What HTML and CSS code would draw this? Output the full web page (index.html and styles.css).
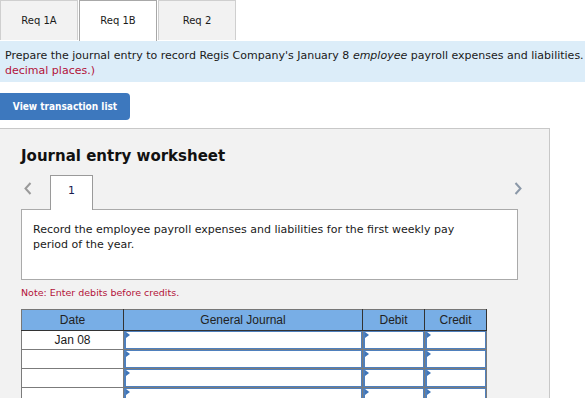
FILE: index.html
```html
<!DOCTYPE html>
<html lang="en">
<head>
    <meta charset="UTF-8">
    <title>Req 1B</title>
    <link rel="stylesheet" href="styles.css">
</head>
<body>
    <div class="tabs">
        <div class="tab">Req 1A</div>
        <div class="tab active">Req 1B</div>
        <div class="tab">Req 2</div>
    </div>
    <div class="instructions">
        Prepare the journal entry to record Regis Company's January 8 <em>employee</em> payroll expenses and liabilities. <span class="red">(Round your final answers to 2<br>decimal places.)</span>
    </div>
    <button class="view-btn">View transaction list</button>

    <div class="worksheet">
        <h2 class="ws-title">Journal entry worksheet</h2>
        <div class="ws-nav">
            <svg class="arrow left" width="8" height="13" viewBox="0 0 8 13"><path d="M6.5 1 L1.5 6.5 L6.5 12" fill="none" stroke="#9a9a9a" stroke-width="2"/></svg>
            <div class="ws-tab">1</div>
            <svg class="arrow right" width="8" height="13" viewBox="0 0 8 13"><path d="M1.5 1 L6.5 6.5 L1.5 12" fill="none" stroke="#8b98a8" stroke-width="2"/></svg>
        </div>
        <div class="ws-box">
            Record the employee payroll expenses and liabilities for the first weekly pay<br>period of the year.
        </div>
        <p class="note">Note: Enter debits before credits.</p>

        <table class="journal">
            <thead>
                <tr>
                    <th class="c-date">Date</th>
                    <th class="c-acct">General Journal</th>
                    <th class="c-num">Debit</th>
                    <th class="c-num">Credit</th>
                </tr>
            </thead>
            <tbody>
                <tr>
                    <td class="date">Jan 08</td>
                    <td class="inp"><div class="field"></div></td>
                    <td class="inp"><div class="field"></div></td>
                    <td class="inp"><div class="field"></div></td>
                </tr>
                <tr>
                    <td class="date"></td>
                    <td class="inp"><div class="field"></div></td>
                    <td class="inp"><div class="field"></div></td>
                    <td class="inp"><div class="field"></div></td>
                </tr>
                <tr>
                    <td class="date"></td>
                    <td class="inp"><div class="field"></div></td>
                    <td class="inp"><div class="field"></div></td>
                    <td class="inp"><div class="field"></div></td>
                </tr>
                <tr>
                    <td class="date"></td>
                    <td class="inp"><div class="field"></div></td>
                    <td class="inp"><div class="field"></div></td>
                    <td class="inp"><div class="field"></div></td>
                </tr>
            </tbody>
        </table>
    </div>
</body>
</html>
```

FILE: styles.css
```css
html {
    overflow: hidden;
}
body {
    margin: 0;
    font-family: "DejaVu Sans", Verdana, sans-serif;
    font-size: 11px;
    color: #1a1a1a;
    background-color: #fff;
}
.tabs {
    display: flex;
    height: 41px;
}
.tab {
    width: 76px;
    height: 39px;
    line-height: 40px;
    margin-right: 1px;
    text-align: center;
    font-size: 10px;
    background-color: #f2f2f2;
    border: 1px solid #cfcfcf;
    border-bottom: none;
}
.tab.active {
    height: 40px;
    background-color: #fff;
    border-color: #a8a8a8;
}
.instructions {
    background-color: #dcedf9;
    padding: 7px 5px 4px;
    line-height: 15px;
    height: 30px;
    white-space: nowrap;
    overflow: hidden;
}
.red {
    color: #b3123a;
}
.view-btn {
    display: block;
    margin-top: 11px;
    width: 130px;
    height: 27px;
    padding: 0;
    border: none;
    border-radius: 0 4px 4px 0;
    background-color: #3d78be;
    color: #fff;
    font-family: "DejaVu Sans", Verdana, sans-serif;
    font-stretch: condensed;
    font-size: 10px;
    font-weight: bold;
}
.worksheet {
    margin-top: 8px;
    width: 528px;
    height: 300px;
    padding: 17px 0 0 21px;
    background-color: #f2f2f2;
    border-top: 1px solid #c8c8c8;
    border-right: 1px solid #c8c8c8;
}
.ws-title {
    margin: 0;
    font-size: 15px;
    font-weight: bold;
    line-height: 20px;
    color: #111;
}
.ws-nav {
    display: flex;
    align-items: center;
    margin-top: 9px;
    height: 34px;
    width: 496px;
}
.arrow {
    display: block;
    margin-bottom: 8px;
}
.arrow.left {
    margin-left: 3px;
    margin-right: 18px;
}
.arrow.right {
    margin-left: auto;
    margin-right: -5px;
}
.ws-tab {
    align-self: stretch;
    width: 41px;
    margin-bottom: -1px;
    position: relative;
    z-index: 1;
    background-color: #fff;
    border: 1px solid #9a9a9a;
    border-bottom: none;
    text-align: center;
    line-height: 29px;
    color: #1a1a50;
}
.ws-box {
    width: 473px;
    height: 46px;
    padding: 12px 11px 11px;
    background-color: #fff;
    border: 1px solid #aaa;
    line-height: 15px;
}
.note {
    margin: 6px 0 0;
    font-size: 9.5px;
    line-height: 14px;
    color: #b3123a;
}
.journal {
    margin-top: 9px;
    border-collapse: collapse;
    width: 466px;
    font-family: "Liberation Sans", Arial, sans-serif;
    font-size: 12px;
}
.journal th {
    height: 20px;
    padding: 0;
    background-color: #78aee6;
    color: #222;
    font-weight: normal;
    border: 1px solid #333;
    border-top-color: #777;
}
.journal th:first-child {
    border-left-color: #777;
}
.c-date {
    width: 101px;
}
.c-acct {
    width: 238px;
}
.c-num {
    width: 61px;
}
.journal td {
    height: 18px;
    padding: 0;
    border: 1px solid #7b7b7b;
    background-color: #fff;
}
.journal td.date {
    text-align: center;
}
.journal td.inp {
    position: relative;
}
.field {
    box-sizing: border-box;
    height: 18px;
    border: 1px solid #4f80bd;
    border-left-width: 2px;
}
.field::before {
    content: "";
    position: absolute;
    left: 2px;
    top: 1px;
    border-left: 4px solid #3f75b8;
    border-top: 3px solid transparent;
    border-bottom: 3px solid transparent;
}
```
